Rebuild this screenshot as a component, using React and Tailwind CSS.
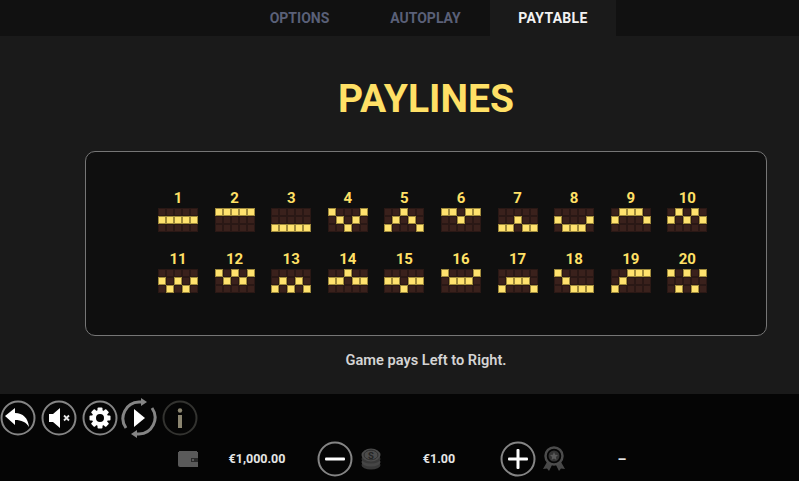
import React from 'react';

const FONT = { fontFamily: 'Roboto, "Liberation Sans", sans-serif' };

const PAYLINES = [
  [1, 1, 1, 1, 1],
  [0, 0, 0, 0, 0],
  [2, 2, 2, 2, 2],
  [0, 1, 2, 1, 0],
  [2, 1, 0, 1, 2],
  [0, 0, 1, 0, 0],
  [2, 2, 1, 2, 2],
  [1, 2, 2, 2, 1],
  [1, 0, 0, 0, 1],
  [1, 0, 1, 0, 1],
  [1, 2, 1, 2, 1],
  [0, 1, 0, 1, 0],
  [2, 1, 2, 1, 2],
  [1, 1, 0, 1, 1],
  [1, 1, 2, 1, 1],
  [0, 1, 1, 1, 0],
  [2, 1, 1, 1, 2],
  [0, 1, 2, 2, 2],
  [2, 1, 0, 0, 0],
  [0, 2, 0, 2, 0],
];

function Payline({ number, line }) {
  const cells = [];
  for (let row = 0; row < 3; row++) {
    for (let col = 0; col < 5; col++) {
      cells.push(
        <div
          key={row + '-' + col}
          className={
            line[col] === row
              ? 'h-2 w-2 border border-[#a08a3c] bg-[#ffe26e]'
              : 'h-2 w-2 border border-[#2a1815] bg-[#3a211c]'
          }
        />
      );
    }
  }
  return (
    <div className="flex flex-col items-center">
      <div className="h-[16px] text-[15px] font-bold leading-[16px] text-[#ffe066]">
        {number}
      </div>
      <div className="mt-[2px] grid grid-cols-[repeat(5,8px)]">{cells}</div>
    </div>
  );
}

function Tab({ label, active }) {
  return (
    <div
      className={
        active
          ? 'flex h-full w-[126px] items-center justify-center bg-[#1a1a1a] text-[14px] font-bold tracking-[0.3px] text-[#f2f2f2]'
          : 'flex h-full w-[126px] items-center justify-center pr-[3px] text-[14px] font-bold text-[#5a6078]'
      }>
      {label}
    </div>
  );
}

function Ring({ children, dim }) {
  return (
    <svg width="36" height="36" viewBox="0 0 36 36" className="shrink-0">
      <circle
        cx="18"
        cy="18"
        r="16.5"
        fill="none"
        stroke={dim ? '#333330' : '#858585'}
        strokeWidth="2"
      />
      {children}
    </svg>
  );
}

function BackIcon() {
  return (
    <Ring>
      <path
        d="M5 16 L15 8 L15 13 C23 13 28 18 29 27 C26 22 21.5 20 15 20 L15 25 Z"
        fill="#fff"
      />
    </Ring>
  );
}

function MuteIcon() {
  return (
    <Ring>
      <path d="M8 14 L12 14 L19 8 L19 28 L12 22 L8 22 Z" fill="#fff" />
      <path
        d="M23 15.5 L28 20.5 M28 15.5 L23 20.5"
        stroke="#e8e8e8"
        strokeWidth="1.8"
      />
    </Ring>
  );
}

function GearIcon() {
  const teeth = [0, 45, 90, 135, 180, 225, 270, 315];
  return (
    <Ring>
      {teeth.map((deg) => (
        <rect
          key={deg}
          x="15.5"
          y="7.5"
          width="5"
          height="5"
          rx="1"
          fill="#fff"
          transform={'rotate(' + deg + ' 18 18)'}
        />
      ))}
      <circle cx="18" cy="18" r="6" fill="none" stroke="#fff" strokeWidth="4" />
    </Ring>
  );
}

function PlayIcon() {
  return (
    <svg width="38" height="42" viewBox="0 0 38 42" className="shrink-0">
      <path
        d="M6 31 A16.5 16.5 0 0 1 19 5 L23 5"
        fill="none"
        stroke="#858585"
        strokeWidth="3"
      />
      <path d="M21 1 L27 5 L21 9 Z" fill="#858585" />
      <path
        d="M32 11 A16.5 16.5 0 0 1 19 37 L15 37"
        fill="none"
        stroke="#858585"
        strokeWidth="3"
      />
      <path d="M17 33 L11 37 L17 41 Z" fill="#858585" />
      <path d="M14 12 L25 21 L14 30 Z" fill="#fff" />
    </svg>
  );
}

function InfoIcon() {
  return (
    <Ring dim>
      <circle cx="18" cy="10.5" r="2.2" fill="#8b8570" />
      <rect x="16" y="15" width="4" height="13" fill="#8b8570" />
    </Ring>
  );
}

function WalletIcon() {
  return (
    <svg width="22" height="18" viewBox="0 0 22 18" className="shrink-0">
      <path d="M2 1 H20 V3 H2 Z" fill="#5a5a5a" />
      <path d="M1 2 H21 V17 H3 A2 2 0 0 1 1 15 Z" fill="#5a5a5a" />
      <rect x="14" y="8" width="7" height="4" fill="#2a2a2a" />
      <circle cx="16" cy="10" r="1" fill="#6a6a6a" />
    </svg>
  );
}

function CoinsIcon() {
  return (
    <svg width="20" height="22" viewBox="0 0 20 22" className="shrink-0">
      <ellipse cx="10" cy="17" rx="9.5" ry="4.5" fill="#383838" />
      <ellipse cx="10" cy="14" rx="9.5" ry="4.5" fill="#464646" />
      <ellipse cx="10" cy="11" rx="9.5" ry="4.5" fill="#383838" />
      <ellipse cx="10" cy="7" rx="9.5" ry="6.5" fill="#4c4c4c" />
      <ellipse cx="10" cy="7" rx="7" ry="4.8" fill="none" stroke="#2e2e2e" strokeWidth="1" />
      <text
        x="10"
        y="10.5"
        textAnchor="middle"
        fontSize="9.5"
        fontWeight="700"
        fill="#242424">
        S
      </text>
    </svg>
  );
}

function MedalIcon() {
  return (
    <svg width="22" height="26" viewBox="0 0 22 26" className="shrink-0">
      <path d="M4 16 L0 23 L4 22.5 L6 25 L9 19 Z" fill="#484848" />
      <path d="M18 16 L22 23 L18 22.5 L16 25 L13 19 Z" fill="#484848" />
      <circle cx="11" cy="10" r="8.5" fill="none" stroke="#4c4c4c" strokeWidth="2.5" />
      <circle cx="11" cy="10" r="5.5" fill="#333" />
      <path
        d="M11 6 L12.2 8.8 L15 9 L12.9 11 L13.5 14 L11 12.4 L8.5 14 L9.1 11 L7 9 L9.8 8.8 Z"
        fill="#5a5a5a"
      />
    </svg>
  );
}

function Amount({ className, children }) {
  return (
    <div className={'text-center text-[12.5px] font-bold text-[#e6e6e6] ' + className}>
      {children}
    </div>
  );
}

export default function App() {
  return (
    <div style={FONT} className="flex h-[481px] w-[799px] flex-col overflow-hidden bg-[#1a1a1a]">
      <div className="flex h-[36px] shrink-0 justify-start bg-[#111111] pl-[238px]">
        <Tab label="OPTIONS" />
        <Tab label="AUTOPLAY" />
        <Tab label="PAYTABLE" active />
      </div>

      <div className="flex flex-1 flex-col pl-[85px] pr-[32px]">
        <h1 className="mt-[37px] h-[52px] text-center text-[39px] font-bold leading-[52px] text-[#ffe066]">
          PAYLINES
        </h1>
        <div className="mt-[26px] h-[185px] rounded-[10px] border border-[#767676] bg-[#0f0f0f] pl-[72px] pt-[38px]">
          <div className="grid grid-cols-[repeat(10,40px)] gap-x-[16.6px] gap-y-[19px]">
            {PAYLINES.map((line, i) => (
              <Payline key={i} number={i + 1} line={line} />
            ))}
          </div>
        </div>
        <p className="mt-[15px] text-center text-[14.6px] font-semibold leading-[18px] text-[#d4d4d4]">
          Game pays Left to Right.
        </p>
      </div>

      <div className="flex h-[87px] shrink-0 flex-col bg-[#050505]">
        <div className="mt-[3px] flex h-[42px] items-center">
          <div className="flex items-center gap-[5px]">
            <BackIcon />
            <MuteIcon />
            <GearIcon />
          </div>
          <div className="ml-[2px]">
            <PlayIcon />
          </div>
          <div className="ml-[4px]">
            <InfoIcon />
          </div>
        </div>
        <div className="mt-[-2px] flex h-[44px] items-center pl-[177px]">
          <WalletIcon />
          <Amount className="mr-[2px] w-[116px]">€1,000.00</Amount>
          <Ring>
            <rect x="8" y="16.5" width="20" height="3" rx="1" fill="#fff" />
          </Ring>
          <div className="ml-[8px]">
            <CoinsIcon />
          </div>
          <Amount className="w-[116px]">€1.00</Amount>
          <div className="ml-[3px]">
            <Ring>
              <rect x="8" y="16.5" width="20" height="3" rx="1" fill="#fff" />
              <rect x="16.5" y="8" width="3" height="20" rx="1" fill="#fff" />
            </Ring>
          </div>
          <div className="ml-[7px]">
            <MedalIcon />
          </div>
          <Amount className="ml-[36px] w-[42px] text-[14px]">–</Amount>
        </div>
      </div>
    </div>
  );
}
